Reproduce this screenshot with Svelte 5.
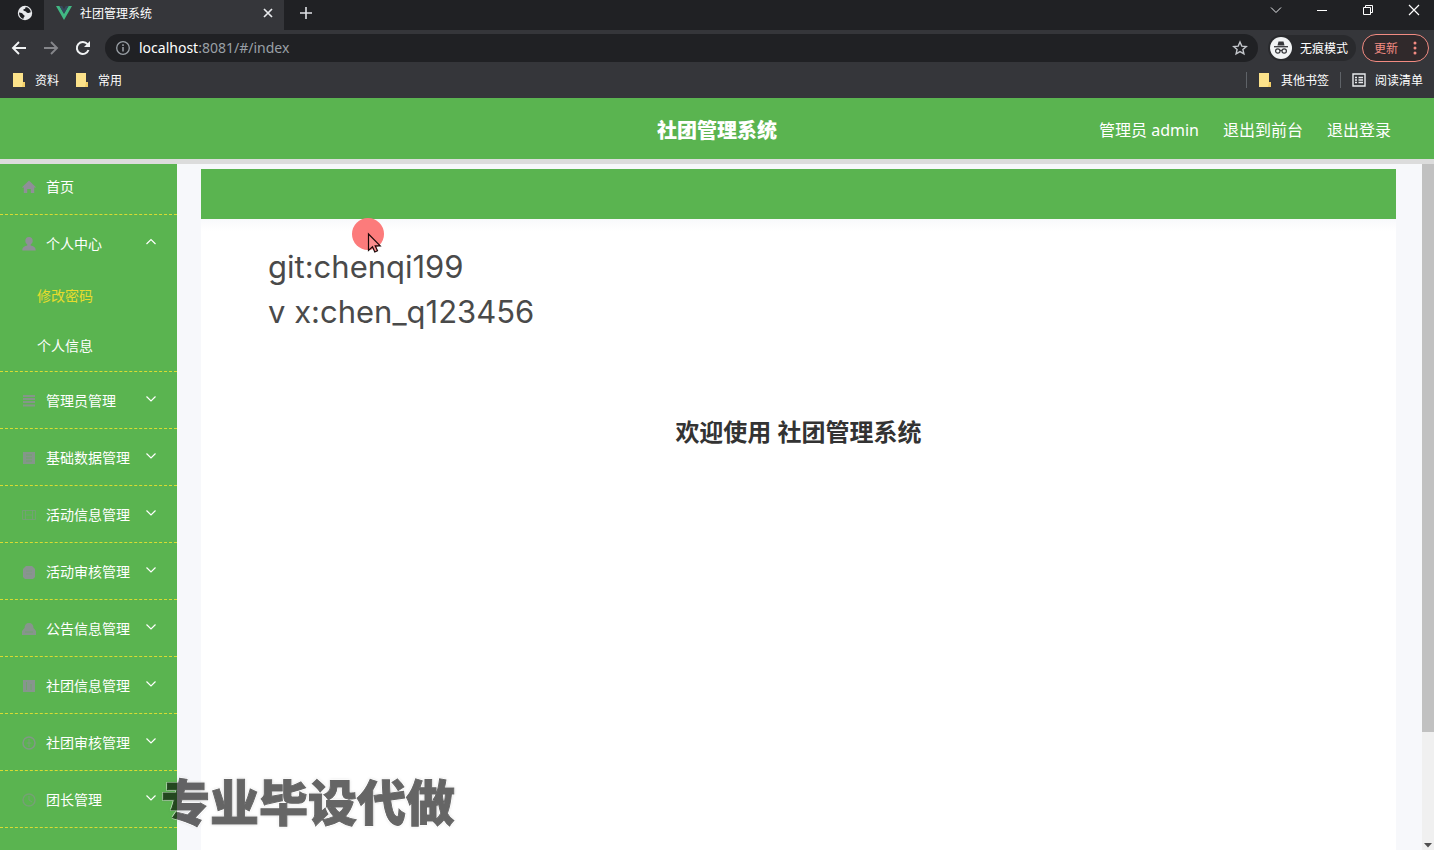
<script>
  const menus = [
    { label: '管理员管理', icon: 'list' },
    { label: '基础数据管理', icon: 'grid' },
    { label: '活动信息管理', icon: 'film' },
    { label: '活动审核管理', icon: 'badge' },
    { label: '公告信息管理', icon: 'bell' },
    { label: '社团信息管理', icon: 'board' },
    { label: '社团审核管理', icon: 'target' },
    { label: '团长管理', icon: 'ring' }
  ];
</script>

{#snippet folder()}
  <svg width="14" height="16" viewBox="0 0 14 16" aria-hidden="true">
    <path d="M1 1h10v9h2v5H1z" fill="#fce28a" />
    <path d="M11 10h2v5h-3z" fill="#f3cf68" />
  </svg>
{/snippet}

{#snippet menuIcon(name)}
  <svg class="menu-icon" width="16" height="16" viewBox="0 0 16 16" aria-hidden="true">
    {#if name === 'home'}
      <path d="M8 1.500L.8 8.500h2V14h3.400v-4h3.600v4h3.400V8.500h2z" fill="currentColor" />
    {:else if name === 'user'}
      <path d="M8 1c2.300 0 3.700 1.500 3.700 3.700 0 1.700-.8 3-2 3.800v1c2.700.5 5 1.500 5 5H1.300c0-3.500 2.300-4.500 5-5v-1c-1.200-.8-2-2.100-2-3.800C4.300 2.500 5.700 1 8 1z" fill="currentColor" />
    {:else if name === 'list'}
      <path d="M2 3h12M2 6h12M2 9h12M2 12.500h12" stroke="currentColor" stroke-width="1.800" opacity=".8" />
    {:else if name === 'grid'}
      <path d="M2 2h12v12H2z" fill="currentColor" opacity=".8" />
      <path d="M5 5h6M5 8h6M5 11h6" stroke="#5ab450" opacity=".6" />
    {:else if name === 'film'}
      <path d="M1.500 3.500h13v9h-13zM4.500 3.500v9M11.500 3.500v9M5 8h6" fill="none" stroke="currentColor" opacity=".45" />
    {:else if name === 'badge'}
      <path d="M5 2h6l3 3v8l-2 2H4l-2-2V5z" fill="currentColor" opacity=".9" />
      <path d="M5 7h6M5 10h6" stroke="#5ab450" opacity=".25" />
    {:else if name === 'bell'}
      <path d="M8 2c3 0 4.500 2 4.500 5L15 10v4H1v-4l2.500-3C3.500 4 5 2 8 2z" fill="currentColor" opacity=".85" />
      <path d="M4 11h8" stroke="#5ab450" opacity=".5" />
    {:else if name === 'board'}
      <path d="M2 2h12v12H2z" fill="currentColor" opacity=".85" />
      <path d="M5.500 4v8M10 6v6" stroke="#5ab450" opacity=".5" />
    {:else if name === 'target'}
      <circle cx="8" cy="8" r="6" fill="none" stroke="currentColor" stroke-width="1.500" opacity=".75" />
      <path d="M8 4v8M5.500 8h5" stroke="currentColor" opacity=".6" />
    {:else}
      <circle cx="8" cy="8" r="6" fill="none" stroke="currentColor" stroke-width="1.500" opacity=".5" />
      <path d="M8 4v4l3 2" fill="none" stroke="currentColor" opacity=".5" />
    {/if}
  </svg>
{/snippet}

{#snippet arrow(up)}
  <svg class="arrow" width="12" height="12" viewBox="0 0 12 12" aria-hidden="true">
    <path d={up ? 'M1.500 8L6 3.500 10.500 8' : 'M1.500 3.500L6 8l4.500-4.500'} fill="none" stroke="currentColor" stroke-width="1.200" />
  </svg>
{/snippet}

<div class="screen">
  <div class="tabstrip">
    <div class="pinned">
      <svg width="16" height="16" viewBox="0 0 16 16" aria-hidden="true">
        <circle cx="8" cy="8" r="7.200" fill="#e8eaed" />
        <path d="M2 7.500c2 .2 3.500.5 4 1.800.4 1 1.800.7 1.600 2-.2.900-1.200 1-1.300 2.600C3.500 13 2 10.500 2 7.500zM8.500 2c.2 1.500-.5 2-1.700 2.300C5.500 4.700 6.500 6 8 6.200c1.500.1 1.400 1.800 3 1.800.9 0 1.500-.7 2.800-.8C13.500 4.500 11.500 2.200 8.500 2z" fill="#202124" />
      </svg>
    </div>
    <div class="tab">
      <svg width="16" height="14" viewBox="0 0 16 14" aria-hidden="true">
        <path d="M0 0h3.500L8 7.800 12.500 0H16L8 14z" fill="#41b883" />
        <path d="M3.500 0H6.200L8 3.200 9.800 0h2.700L8 7.800z" fill="#35495e" />
      </svg>
      <span class="tab-title">社团管理系统</span>
      <button aria-label="关闭标签页">
        <svg width="10" height="10" viewBox="0 0 10 10"><path d="M1 1l8 8M9 1L1 9" stroke="#e8eaed" stroke-width="1.700" /></svg>
      </button>
    </div>
    <button class="new-tab" aria-label="新标签页">
      <svg width="12" height="12" viewBox="0 0 12 12"><path d="M6 0v12M0 6h12" stroke="#dfe1e5" stroke-width="1.600" /></svg>
    </button>
    <div class="window-buttons">
      <button aria-label="搜索标签页"><svg width="12" height="12" viewBox="0 0 12 12"><path d="M1 3.500l5 5 5-5" fill="none" stroke="#e8eaed" /></svg></button>
      <button aria-label="最小化"><svg width="12" height="12" viewBox="0 0 12 12"><path d="M1 6.500h10" stroke="#fff" /></svg></button>
      <button aria-label="还原"><svg width="12" height="12" viewBox="0 0 12 12"><path d="M1.500 3.500h7v7h-7zM3.500 3.500v-2h7v7h-2" fill="none" stroke="#fff" /></svg></button>
      <button aria-label="关闭"><svg width="12" height="12" viewBox="0 0 12 12"><path d="M1 1l10 10M11 1L1 11" stroke="#fff" stroke-width="1.200" /></svg></button>
    </div>
  </div>

  <div class="toolbar">
    <button aria-label="后退"><svg width="16" height="16" viewBox="0 0 16 16"><path d="M15 8H2M8 2L2 8l6 6" fill="none" stroke="#f1f3f4" stroke-width="1.900" /></svg></button>
    <button aria-label="前进"><svg width="16" height="16" viewBox="0 0 16 16"><path d="M1 8h13M8 2l6 6-6 6" fill="none" stroke="#85868a" stroke-width="1.900" /></svg></button>
    <button aria-label="刷新"><svg width="16" height="16" viewBox="0 0 16 16"><path d="M13.500 10A6 6 0 1 1 12.500 4.200" fill="none" stroke="#f1f3f4" stroke-width="2" /><path d="M15 1v6H9z" fill="#f1f3f4" /></svg></button>
    <div class="address">
      <svg width="16" height="16" viewBox="0 0 16 16" aria-hidden="true"><circle cx="8" cy="8" r="6.300" fill="none" stroke="#9aa0a6" stroke-width="1.300" /><path d="M8 7v4.500M8 4.300v1.600" stroke="#9aa0a6" stroke-width="1.500" /></svg>
      <span class="url"><b>localhost</b>:8081/#/index</span>
      <button aria-label="为此标签页添加书签">
        <svg width="16" height="16" viewBox="0 0 16 16"><path d="M8 2l1.800 4.100 4.500.4-3.400 3 1 4.400L8 11.600l-3.900 2.300 1-4.400-3.400-3 4.500-.4z" fill="none" stroke="#c4c7cc" stroke-width="1.400" /></svg>
      </button>
    </div>
    <div class="incognito">
      <svg width="22" height="22" viewBox="0 0 22 22" aria-hidden="true">
        <circle cx="11" cy="11" r="11" fill="#f1f3f4" />
        <path d="M7.500 8.500L8.500 4.500h5l1 4z" fill="#35363a" />
        <path d="M4 9.700h14" stroke="#35363a" stroke-width="1.300" />
        <g fill="none" stroke="#35363a" stroke-width="1.200"><circle cx="7.800" cy="14" r="2.200" /><circle cx="14.200" cy="14" r="2.200" /><path d="M10 13.700q1-.6 2 0" /></g>
      </svg>
      <span>无痕模式</span>
    </div>
    <button class="update">
      <span>更新</span>
      <svg width="4" height="14" viewBox="0 0 4 14" aria-hidden="true"><g fill="#f28b82"><circle cx="2" cy="2" r="1.500" /><circle cx="2" cy="7" r="1.500" /><circle cx="2" cy="12" r="1.500" /></g></svg>
    </button>
  </div>

  <div class="bookmarks">
    <a href="#/">{@render folder()}资料</a>
    <a href="#/">{@render folder()}常用</a>
    <span class="fill"></span>
    <i></i>
    <a href="#/">{@render folder()}其他书签</a>
    <i></i>
    <a href="#/">
      <svg width="14" height="14" viewBox="0 0 14 14" aria-hidden="true"><path d="M1 1h12v12H1zM3 4.500h2M3 7h2M3 9.500h2M6.500 4.500H11M6.500 7H11M6.500 9.500H11" fill="none" stroke="#e8eaed" stroke-width="1.400" /></svg>阅读清单
    </a>
  </div>

  <header>
    <h1>社团管理系统</h1>
    <nav>
      <span>管理员 admin</span>
      <a href="#/front">退出到前台</a>
      <a href="#/login">退出登录</a>
    </nav>
  </header>

  <div class="body">
    <aside>
      <div class="group first">
        <a class="row" href="#/index">{@render menuIcon('home')}<span>首页</span></a>
      </div>
      <div class="group">
        <button class="row">{@render menuIcon('user')}<span>个人中心</span>{@render arrow(true)}</button>
        <a class="sub active" href="#/updatePassword">修改密码</a>
        <a class="sub" href="#/center">个人信息</a>
      </div>
      {#each menus as menu}
        <div class="group">
          <button class="row">{@render menuIcon(menu.icon)}<span>{menu.label}</span>{@render arrow(false)}</button>
        </div>
      {/each}
    </aside>

    <main>
      <div class="crumbs"></div>
      <section>
        <p class="contact">git:chenqi199<br />v x:chen_q123456</p>
        <h2>欢迎使用 社团管理系统</h2>
      </section>
    </main>

    <div class="scrollbar">
      <div class="thumb"></div>
      <svg width="8" height="5" viewBox="0 0 8 5" aria-hidden="true"><path d="M0 0h8L4 4.500z" fill="#505050" /></svg>
    </div>
  </div>

  <div class="pointer">
    <svg width="34" height="38" viewBox="0 0 34 38" aria-hidden="true">
      <circle cx="17" cy="17" r="16" fill="#fc7b7b" />
      <path d="M17.500 17v16.500l4-3.700 2.300 5.200 2.700-1.200-2.300-5h5z" fill="#fc8d8d" stroke="#1a0808" stroke-width="1.200" />
    </svg>
  </div>
  <div class="watermark">专业毕设代做</div>
</div>

<style>
  :global(body) { margin: 0; }
  .screen {
    position: relative;
    display: flex;
    flex-direction: column;
    height: 100vh;
    overflow: hidden;
    font-family: "Noto Sans", "Noto Sans CJK SC", sans-serif;
    font-size: 14px;
    color: #fff;
    background: #f7f8fb;
  }
  button {
    display: flex;
    align-items: center;
    justify-content: center;
    padding: 0;
    border: 0;
    background: none;
    color: inherit;
    font: inherit;
  }
  a { color: inherit; text-decoration: none; }
  svg { flex: none; }

  .tabstrip { display: flex; height: 30px; background: #202124; font-size: 12px; }
  .pinned { display: flex; align-items: center; justify-content: center; width: 44px; padding: 0 0 4px 6px; box-sizing: border-box; }
  .tab {
    display: flex;
    align-items: center;
    gap: 8px;
    width: 240px;
    box-sizing: border-box;
    padding: 0 11px 4px 12px;
    background: #35363a;
  }
  .tab-title { flex: 1; }
  .new-tab { width: 44px; padding-bottom: 4px; }
  .window-buttons { display: flex; margin-left: auto; padding-right: 14px; gap: 34px; }
  .window-buttons button { width: 12px; padding-bottom: 10px; }

  .toolbar { display: flex; align-items: center; height: 36px; padding: 0 5px 0 11px; gap: 16px; background: #35363a; }
  .address { display: flex; flex: 1; align-items: center; gap: 8px; height: 28px; padding: 0 10px; margin-left: -2px; border-radius: 14px; background: #202124; }
  .url { flex: 1; padding-bottom: 2px; color: #9aa0a6; }
  .url b { font-weight: 400; color: #fff; }
  .incognito { display: flex; align-items: center; gap: 8px; height: 26px; padding: 0 8px 0 2px; margin: 0 -10px 0 -6px; border-radius: 13px; background: #292a2d; font-size: 12px; }
  .update { gap: 15px; height: 28px; padding: 0 11px; border: 1px solid #f28b82; border-radius: 14px; color: #f28b82; background: #30292b; font-size: 12px; }

  .bookmarks { display: flex; align-items: center; height: 32px; padding: 0 11px 4px 12px; box-sizing: border-box; gap: 11px; background: #35363a; font-size: 12px; }
  .bookmarks a { display: flex; align-items: center; gap: 9px; }
  .bookmarks a + a { margin-left: 5px; }
  .fill { flex: 1; }
  .bookmarks i { width: 1px; height: 16px; background: #5f6368; }

  header { display: grid; grid-template-columns: 1fr auto 1fr; align-items: center; height: 61px; border-bottom: 5px solid #dcdcdc; background: #5ab450; }
  h1 { grid-column: 2; margin: 0; padding-top: 4px; font-size: 20px; font-weight: 900; line-height: 30px; }
  header nav { display: flex; justify-content: flex-end; gap: 24px; padding-right: 43px; font-size: 16px; }

  .body { display: flex; flex: 1; min-height: 0; }
  aside { width: 177px; background: #5ab450; }
  .group { border-bottom: 1px dashed #d8dc32; }
  .row { display: flex; align-items: center; justify-content: flex-start; gap: 9px; width: 100%; height: 56px; padding: 0 20px 0 21px; box-sizing: border-box; }
  .first .row { height: 50px; padding-bottom: 6px; }
  .menu-icon { margin-top: 2px; color: #8f8f98; }
  .arrow { margin: 0 0 2px auto; }
  .sub { display: block; padding-left: 37px; line-height: 50px; }
  .active { color: #e6dc2c; }

  main { display: flex; flex: 1; flex-direction: column; min-width: 0; padding: 5px 26px 0 24px; }
  .crumbs { height: 50px; background: #5ab450; }
  section { flex: 1; padding: 25px 67px; background: linear-gradient(#f8f9fb, #fff 12px); }
  .contact { margin: 0; color: #4a4a4a; font-family: Inter, sans-serif; font-size: 31px; line-height: 45px; }
  h2 { margin: 80px 0 0; color: #333; text-align: center; font-size: 24px; line-height: 36px; }

  .scrollbar { display: flex; flex-direction: column; align-items: center; justify-content: space-between; width: 12px; padding-bottom: 2px; background: #f0f0f0; }
  .thumb { width: 100%; height: 83%; background: #c1c1c1; }

  .pointer { position: absolute; left: 351px; top: 217px; }
  .watermark {
    position: absolute;
    left: 161px;
    top: 764px;
    opacity: 0.6;
    color: #000;
    font-family: "Noto Sans CJK SC", sans-serif;
    font-size: 49px;
    font-weight: 900;
    line-height: 72px;
    -webkit-text-stroke: 1px #000;
    text-shadow: 1px 1px 0 #fff, -1px 1px 0 #fff, 1px -1px 0 #fff, -1px -1px 0 #fff, 0 0 3px #777;
  }
</style>
